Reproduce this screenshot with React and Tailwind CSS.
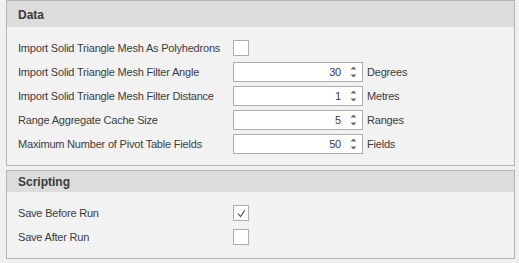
import React from 'react';

function CheckBox({ checked }) {
    return (
        <div className="w-4 h-4 shrink-0 border border-[#adadad] bg-white flex items-center justify-center">
            {checked && (
                <svg width="9" height="9" viewBox="0 0 9 9" className="mt-[1px]">
                    <path d="M1 4.5 L3.5 7.5 L8 1" fill="none" stroke="#4a4a4a" strokeWidth="1.1" />
                </svg>
            )}
        </div>
    );
}

function Spin({ value, unit }) {
    return (
        <div className="flex items-center shrink-0">
            <div className="w-[130px] h-5 border border-[#adadad] bg-white flex items-center">
                <div className="flex-1 text-right pr-[3px] leading-none">{value}</div>
                <div className="w-[18px] h-full flex flex-col items-center justify-center gap-[4px]">
                    <svg width="7" height="4" viewBox="0 0 7 4">
                        <path d="M0.5 3.5 L3.5 0.5 L6.5 3.5 Z" fill="#6a6a6a" />
                    </svg>
                    <svg width="7" height="4" viewBox="0 0 7 4">
                        <path d="M0.5 0.5 L3.5 3.5 L6.5 0.5 Z" fill="#6a6a6a" />
                    </svg>
                </div>
            </div>
            <span className="ml-[4px]">{unit}</span>
        </div>
    );
}

const dataRows = [
    { label: 'Import Solid Triangle Mesh Filter Angle', value: '30', unit: 'Degrees' },
    { label: 'Import Solid Triangle Mesh Filter Distance', value: '1', unit: 'Metres' },
    { label: 'Range Aggregate Cache Size', value: '5', unit: 'Ranges' },
    { label: 'Maximum Number of Pivot Table Fields', value: '50', unit: 'Fields' },
];

const labelCls = 'w-[226px] shrink-0 pl-[11px] whitespace-nowrap';

export default function App() {
    return (
        <div className="w-[519px] h-[263px] bg-[#f0f0f0] pl-[6px] pr-[4px] text-[11px] tracking-[-0.2px] text-[#3c3c3c] font-['Liberation_Sans',Arial,sans-serif] overflow-hidden">
            {/* Data */}
            <div className="border border-[#b4b4b4] bg-[#f2f2f2]">
                <div className="h-[26px] bg-[#dcdcdc] pl-[11px] pt-[1px] flex items-center font-bold text-[12px] tracking-normal text-[#3a3a3a]">Data</div>
                <div className="pt-[13px] pb-[11px]">
                    <div className="flex items-center h-4">
                        <div className={labelCls}>Import Solid Triangle Mesh As Polyhedrons</div>
                        <CheckBox />
                    </div>
                    <div className="mt-[6px] flex flex-col gap-1">
                        {dataRows.map(r => (
                            <div key={r.label} className="flex items-center h-5">
                                <div className={labelCls}>{r.label}</div>
                                <Spin value={r.value} unit={r.unit} />
                            </div>
                        ))}
                    </div>
                </div>
            </div>

            {/* Scripting */}
            <div className="mt-[4px] border border-[#b4b4b4] bg-[#f2f2f2]">
                <div className="h-[21px] bg-[#dcdcdc] pl-[11px] flex items-center font-bold text-[12px] tracking-normal text-[#3a3a3a]">Scripting</div>
                <div className="pt-[13px] pb-[13px] flex flex-col gap-2">
                    <div className="flex items-center h-4">
                        <div className={labelCls}>Save Before Run</div>
                        <CheckBox checked />
                    </div>
                    <div className="flex items-center h-4">
                        <div className={labelCls}>Save After Run</div>
                        <CheckBox />
                    </div>
                </div>
            </div>
        </div>
    );
}
